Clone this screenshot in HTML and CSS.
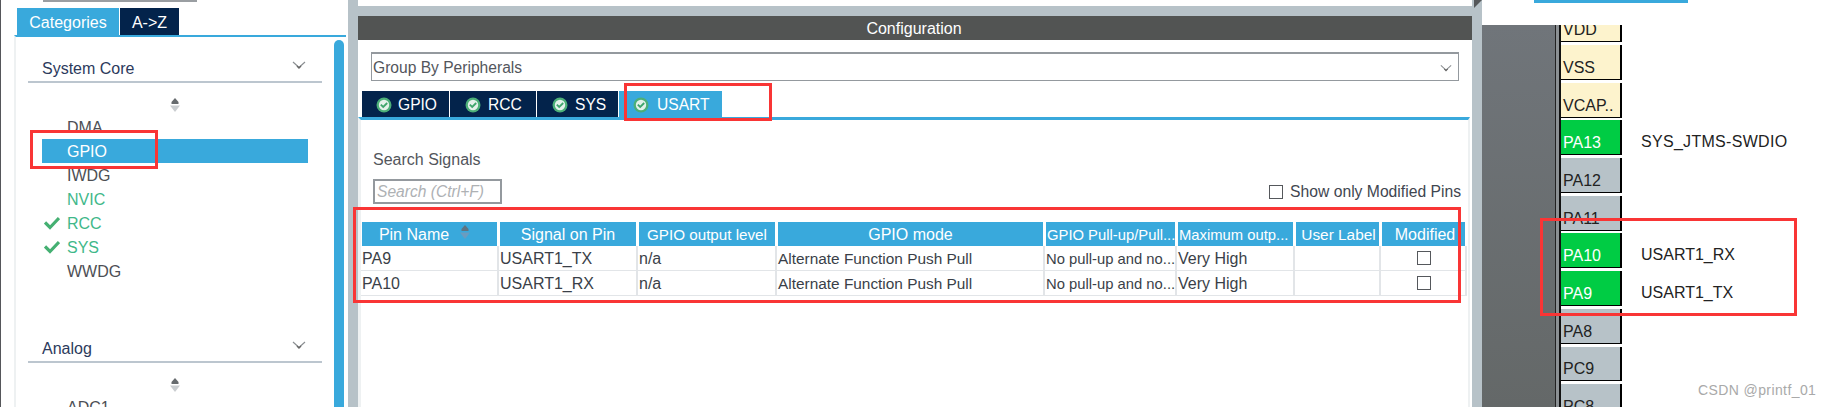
FILE: index.html
```html
<!DOCTYPE html>
<html lang="en">
<head>
<meta charset="utf-8">
<title>Pinout and Configuration</title>
<link rel="stylesheet" href="styles.css">
</head>
<body>
<svg class="defs" width="0" height="0" aria-hidden="true">
  <defs>
    <symbol id="chev" viewBox="0 0 14 8"><path d="M1 1 L7 6.5 L13 1" fill="none" stroke="#8b8f92" stroke-width="1.2"/><path d="M5 5 L7 7 L9 5" fill="none" stroke="#666" stroke-width="1.4"/></symbol>
    <symbol id="sort" viewBox="0 0 12 14"><path d="M6 0 L9.5 4 V6 H2.5 V4 Z" fill="#666b6e"/><path d="M1 7.5 H11 L6 14 Z" fill="#c9cdd0"/></symbol>
    <symbol id="sorth" viewBox="0 0 12 14"><path d="M6 0 L9.5 4 V6 H2.5 V4 Z" fill="#5f7482"/><path d="M1 7.5 H11 L6 14 Z" fill="#6a9cc0"/></symbol>
    <symbol id="tick" viewBox="0 0 16 14"><path d="M1 6.5 L6 11.5 L15 2" fill="none" stroke="#45b072" stroke-width="3.2"/></symbol>
    <symbol id="badge" viewBox="0 0 16 16"><circle cx="8" cy="8" r="7.5" fill="#4caf78"/><circle cx="8" cy="8" r="5.2" fill="#e4f1ea"/><path d="M4.8 7.6 L7.2 10 L11.2 6" fill="none" stroke="#3fa56c" stroke-width="1.8"/></symbol>
  </defs>
</svg>

<aside class="left">
  <div class="left-search"></div>
  <div class="left-tabs">
    <div class="ltab ltab-on">Categories</div>
    <div class="ltab">A-&gt;Z</div>
  </div>
  <div class="left-panel">
    <div class="tree">
      <div class="group">
        <span>System Core</span>
        <svg class="chev"><use href="#chev"/></svg>
      </div>
      <div class="spin"><svg class="sort"><use href="#sort"/></svg></div>
      <ul class="items">
        <li class="item">DMA</li>
        <li class="item item-on">GPIO</li>
        <li class="item">IWDG</li>
        <li class="item item-ok">NVIC</li>
        <li class="item item-ok"><svg class="tick"><use href="#tick"/></svg>RCC</li>
        <li class="item item-ok"><svg class="tick"><use href="#tick"/></svg>SYS</li>
        <li class="item">WWDG</li>
      </ul>
      <div class="group group-2">
        <span>Analog</span>
        <svg class="chev"><use href="#chev"/></svg>
      </div>
      <div class="spin"><svg class="sort"><use href="#sort"/></svg></div>
      <ul class="items">
        <li class="item">ADC1</li>
      </ul>
    </div>
    <div class="scrollbar"></div>
  </div>
</aside>

<main class="middle">
  <div class="top-strip"><span class="corner"></span></div>
  <div class="config">
    <div class="config-head">Configuration</div>
    <div class="config-body">
      <div class="select">
        <span>Group By Peripherals</span>
        <svg class="select-chev"><use href="#chev"/></svg>
      </div>
      <div class="tabs">
        <div class="tab tab-first"><svg class="badge"><use href="#badge"/></svg>GPIO</div>
        <div class="tab"><svg class="badge"><use href="#badge"/></svg>RCC</div>
        <div class="tab tab-sys"><svg class="badge"><use href="#badge"/></svg>SYS</div>
        <div class="tab tab-on"><svg class="badge"><use href="#badge"/></svg>USART</div>
      </div>
      <div class="pane">
        <div class="search-label">Search Signals</div>
        <div class="search-row">
          <div class="search-input">Search (Ctrl+F)</div>
          <label class="only"><span class="box"></span>Show only Modified Pins</label>
        </div>
        <div class="grid grid-head">
          <div class="hcell hcell-sort">Pin Name<svg class="sort-h"><use href="#sorth"/></svg></div>
          <div class="hcell">Signal on Pin</div>
          <div class="hcell hcell-small">GPIO output level</div>
          <div class="hcell">GPIO mode</div>
          <div class="hcell hcell-tight">GPIO Pull-up/Pull...</div>
          <div class="hcell hcell-tight">Maximum outp...</div>
          <div class="hcell hcell-label">User Label</div>
          <div class="hcell hcell-end">Modified</div>
        </div>
        <div class="grid grid-row">
          <div class="cell">PA9</div>
          <div class="cell">USART1_TX</div>
          <div class="cell">n/a</div>
          <div class="cell cell-mode">Alternate Function Push Pull</div>
          <div class="cell cell-pull">No pull-up and no...</div>
          <div class="cell">Very High</div>
          <div class="cell"></div>
          <div class="cell cell-c"><span class="box"></span></div>
        </div>
        <div class="grid grid-row">
          <div class="cell">PA10</div>
          <div class="cell">USART1_RX</div>
          <div class="cell">n/a</div>
          <div class="cell cell-mode">Alternate Function Push Pull</div>
          <div class="cell cell-pull">No pull-up and no...</div>
          <div class="cell">Very High</div>
          <div class="cell"></div>
          <div class="cell cell-c"><span class="box"></span></div>
        </div>
      </div>
    </div>
  </div>
</main>

<section class="chip">
  <div class="chip-top"><span class="chip-bar"></span></div>
  <div class="chip-main">
    <div class="die"></div>
    <div class="rail"></div>
    <div class="pins">
      <div class="pin pin-first"><div class="pad pad-pow">VDD</div></div>
      <div class="pin"><div class="pad pad-pow">VSS</div></div>
      <div class="pin"><div class="pad pad-pow">VCAP..</div></div>
      <div class="pin"><div class="pad pad-on">PA13</div><div class="sig sig-wide">SYS_JTMS-SWDIO</div></div>
      <div class="pin"><div class="pad">PA12</div></div>
      <div class="pin"><div class="pad">PA11</div></div>
      <div class="pin"><div class="pad pad-on">PA10</div><div class="sig">USART1_RX</div></div>
      <div class="pin"><div class="pad pad-on">PA9</div><div class="sig">USART1_TX</div></div>
      <div class="pin"><div class="pad">PA8</div></div>
      <div class="pin"><div class="pad">PC9</div></div>
      <div class="pin"><div class="pad">PC8</div></div>
    </div>
  </div>
</section>

<div class="mark mark-gpio"></div>
<div class="mark mark-tab"></div>
<div class="mark mark-table"></div>
<div class="mark mark-pins"></div>
<div class="watermark">CSDN @printf_01</div>
</body>
</html>
```
FILE: styles.css
```css
* { box-sizing: border-box; }
html, body { margin: 0; padding: 0; }
body {
  position: relative;
  display: flex;
  width: 1829px;
  height: 407px;
  overflow: hidden;
  background: #fff;
  font-family: "Liberation Sans", Arial, sans-serif;
  font-size: 16px;
  color: #3f4650;
}
.defs { position: absolute; }

/* left column */
.left {
  width: 348px;
  flex: none;
  height: 407px;
  border-left: 1px solid #55565a;
  padding-left: 13px;
  padding-right: 2px;
  background: #fff;
}
.left-search {
  width: 154px;
  height: 2px;
  margin-left: 29px;
  background: #9a9ea2;
}
.left-tabs {
  display: flex;
  gap: 1px;
  height: 27px;
  margin-top: 6px;
  padding-left: 3px;
}
.ltab {
  width: 59px;
  background: #03234b;
  color: #fff;
  text-align: center;
  line-height: 29px;
}
.ltab-on { width: 102px; background: #39a9dc; }
.left-panel {
  display: flex;
  height: 372px;
  border-top: 2px solid #39a9dc;
  border-left: 2px solid #eef1f2;
  padding-top: 3px;
  overflow: hidden;
}
.tree { width: 318px; flex: none; padding-left: 12px; }
.group {
  display: flex;
  align-items: center;
  justify-content: space-between;
  width: 294px;
  height: 43px;
  padding: 16px 16px 0 14px;
  border-bottom: 2px solid #bcc6cf;
  color: #2c3a5c;
}
.group-2 { height: 43px; margin-top: 37px; }
.chev { width: 14px; height: 8px; margin-top: -8px; }
.spin { display: flex; justify-content: center; padding-top: 15px; height: 32px; width: 294px; }
.sort { width: 12px; height: 14px; }
.items { list-style: none; margin: 0; padding: 0; }
.item {
  position: relative;
  height: 24px;
  width: 266px;
  margin-left: 14px;
  padding-left: 25px;
  line-height: 25px;
  color: #4d4f55;
}
.item-on { background: #39a9dc; color: #fff; }
.item-ok { color: #3fb88a; }
.tick {
  position: absolute;
  left: 2px;
  top: 5px;
  width: 16px;
  height: 14px;
}
.scrollbar {
  width: 10px;
  flex: none;
  height: 372px;
  background: #39a9dc;
  border-radius: 5px 5px 0 0;
}

/* centre column */
.middle {
  width: 1134px;
  flex: none;
  height: 407px;
  background: #b7c2c8;
}
.top-strip {
  position: relative;
  height: 6px;
  margin-right: 10px;
  margin-left: 10px;
  background: #fff;
}
.corner {
  position: absolute;
  right: -10px;
  top: 0;
  width: 0;
  height: 0;
  border-top: 8px solid #55585a;
  border-right: 8px solid transparent;
}
.config {
  margin: 10px 10px 0;
  height: 391px;
  background: #fff;
}
.config-head {
  height: 24px;
  background: #525453;
  color: #fff;
  text-align: center;
  line-height: 26px;
  padding-right: 2px;
}
.config-body { height: 367px; }
.select {
  display: flex;
  align-items: center;
  justify-content: space-between;
  width: 1088px;
  height: 29px;
  margin: 12px 0 0 13px;
  border: 1px solid #94999e;
  border-top-width: 2px;
  padding: 1px 6px 0 1px;
  font-size: 15.6px;
  color: #53565c;
}
.select-chev { width: 12px; height: 8px; }
.tabs {
  display: flex;
  gap: 1px;
  height: 26px;
  margin-top: 10px;
  padding-left: 4px;
}
.tab {
  display: flex;
  align-items: center;
  gap: 7px;
  padding: 1px 0 0 15px;
  width: 86px;
  background: #03234b;
  color: #fff;
  font-size: 15.6px;
}
.tab-first { width: 87px; padding-left: 14px; gap: 6px; }
.tab-sys { width: 81px; }
.tab-on { width: 103px; padding-left: 14px; gap: 8px; background: #39a9dc; }
.badge { width: 16px; height: 16px; flex: none; }
.pane {
  height: 290px;
  margin-right: 2px;
  border-top: 3px solid #39a9dc;
  border-left: 3px solid #eef1f2;
  border-right: 2px solid #eef1f2;
  padding-top: 1px;
}
.search-label {
  margin: 30px 0 0 12px;
  line-height: 18px;
  color: #53565c;
}
.search-row {
  display: flex;
  justify-content: space-between;
  align-items: center;
  margin-top: 10px;
  height: 25px;
  padding-left: 12px;
  padding-right: 7px;
}
.search-input {
  width: 129px;
  height: 25px;
  border: 2px solid #94999e;
  padding-left: 2px;
  line-height: 21px;
  font-style: italic;
  font-size: 15.6px;
  color: #aeb1b4;
}
.only { display: flex; align-items: center; gap: 7px; font-size: 15.7px; color: #3f4650; }
.box {
  display: block;
  width: 14px;
  height: 14px;
  border: 1px solid #55585c;
  background: #fff;
}
.grid {
  display: grid;
  grid-template-columns: 138px 139px 139px 268px 132px 118px 86px 86px;
  width: 1106px;
  font-size: 16px;
}
.grid-head { margin-top: 18px; height: 24px; }
.hcell {
  display: flex;
  align-items: center;
  justify-content: center;
  gap: 10px;
  margin-left: 1px;
  margin-right: 2px;
  padding-top: 1px;
  background: #39a9dc;
  color: #fff;
  white-space: nowrap;
  overflow: hidden;
}
.hcell-sort { padding-right: 9px; }
.hcell-small { font-size: 15.2px; }
.hcell-tight { justify-content: flex-start; padding-left: 1px; font-size: 14.8px; }
.hcell-label { font-size: 15.4px; padding-left: 2px; }
.hcell-end { padding-left: 3px; }
.sort-h { width: 12px; height: 14px; margin-top: -6px; flex: none; }
.grid-row { height: 25px; }
.cell {
  display: flex;
  align-items: center;
  height: 25px;
  padding: 1px 0 0 1px;
  border-right: 2px solid #e2e5e8;
  border-bottom: 1px solid #e2e5e8;
  color: #3a3f48;
  white-space: nowrap;
  overflow: hidden;
}
.cell-mode { font-size: 15.4px; }
.cell-pull { font-size: 14.8px; }
.cell-c { justify-content: center; padding-top: 0; }

/* right column */
.chip { flex: 1; height: 407px; background: #fff; }
.chip-top { height: 25px; padding-left: 52px; }
.chip-bar { display: block; width: 154px; height: 3px; background: #39a9dc; }
.chip-main { display: flex; height: 382px; overflow: hidden; }
.die {
  width: 73px;
  flex: none;
  background: linear-gradient(180deg, #70757a, #646868);
}
.rail {
  width: 6px;
  flex: none;
  border-left: 1px solid #222;
  border-right: 2px solid #111;
  background: #8b9093;
}
.pins { flex: 1; }
.pin { display: flex; align-items: stretch; height: 37.7px; }
.pin-first { height: 20px; }
.pad {
  width: 61px;
  flex: none;
  height: calc(100% - 2.7px);
  display: flex;
  align-items: flex-end;
  padding: 0 0 2px 2px;
  border-right: 2px solid #000;
  border-bottom: 1px solid #000;
  background: #b7c2c8;
  color: #222;
  overflow: hidden;
  line-height: 18px;
}
.pin-first .pad { height: 17px; }
.pad-pow { background: #fdf3cd; }
.pad-on { background: #00cc44; color: #fff; }
.sig {
  margin-left: 19px;
  padding-top: 13px;
  line-height: 18px;
  color: #222;
  white-space: nowrap;
}
.sig-wide { letter-spacing: 0.3px; }

/* red annotations laid over the screenshot */
.mark {
  position: absolute;
  border: 3px solid #f93535;
  pointer-events: none;
}
.mark-gpio { left: 30px; top: 130px; width: 128px; height: 39px; }
.mark-tab { left: 624px; top: 83px; width: 148px; height: 38px; }
.mark-table { left: 353px; top: 207px; width: 1108px; height: 96px; }
.mark-pins { left: 1540px; top: 218px; width: 257px; height: 98px; }
.watermark {
  position: absolute;
  left: 1698px;
  top: 382px;
  font-size: 14px;
  line-height: 16px;
  color: #a9a9a9;
  letter-spacing: 0.4px;
}
```
